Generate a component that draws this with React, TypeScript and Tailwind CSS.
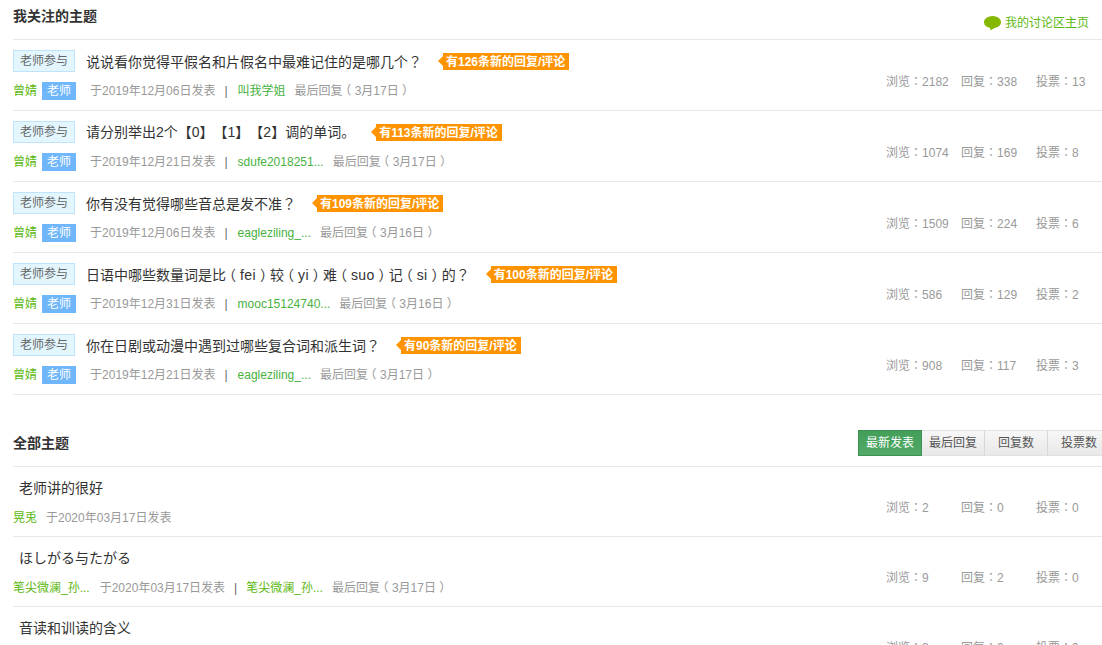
import React from "react";

const font = { fontFamily: '"Liberation Sans", "Noto Sans CJK SC", sans-serif' };
const centred = { fontFamily: '"Noto Sans CJK TC", sans-serif' };

type Row = { title: string; badge: string; last: string; date: string; reply: string; views: string; replies: string; votes: string };

const rows: Row[] = [
  { title: "说说看你觉得平假名和片假名中最难记住的是哪几个？", badge: "有126条新的回复/评论", last: "叫我学姐", date: "2019年12月06日", reply: "3月17日", views: "2182", replies: "338", votes: "13" },
  { title: "请分别举出2个【0】【1】【2】调的单词。", badge: "有113条新的回复/评论", last: "sdufe2018251...", date: "2019年12月21日", reply: "3月17日", views: "1074", replies: "169", votes: "8" },
  { title: "你有没有觉得哪些音总是发不准？", badge: "有109条新的回复/评论", last: "eagleziling_...", date: "2019年12月06日", reply: "3月16日", views: "1509", replies: "224", votes: "6" },
  { title: "日语中哪些数量词是比（fei）较（yi）难（suo）记（si）的？", badge: "有100条新的回复/评论", last: "mooc15124740...", date: "2019年12月31日", reply: "3月16日", views: "586", replies: "129", votes: "2" },
  { title: "你在日剧或动漫中遇到过哪些复合词和派生词？", badge: "有90条新的回复/评论", last: "eagleziling_...", date: "2019年12月21日", reply: "3月17日", views: "908", replies: "117", votes: "3" },
];

// The reference's font centres full-width punctuation in its em box.
function P({ text }: { text: string }) {
  return (
    <>
      {text.split(/([（）？：]|[a-z]+)/).map((part, i) => {
        if (part === "（") return <span key={i} className="inline-block -translate-x-[0.28em]">（</span>;
        if (part === "）") return <span key={i} className="inline-block translate-x-[0.28em]">）</span>;
        if (part === "？" || part === "：") return <span key={i} style={centred}>{part}</span>;
        if (/^[a-z]+$/.test(part)) return <span key={i} className="tracking-[0.4px]">{part}</span>;
        return part;
      })}
    </>
  );
}

function Stats({ views, replies, votes }: { views: string; replies: string; votes: string }) {
  return (
    <div className="mt-[12px] flex w-[216px] shrink-0 text-[12px] leading-[18px] text-[#999]">
      <span className="w-[75px]"><P text={`浏览：${views}`} /></span>
      <span className="w-[75px]"><P text={`回复：${replies}`} /></span>
      <span className="w-[66px]"><P text={`投票：${votes}`} /></span>
    </div>
  );
}

function Followed({ r }: { r: Row }) {
  return (
    <div className="flex h-[71px] items-center justify-between border-b border-[#e8e8e8]">
      <div className="flex flex-col">
        <div className="flex h-[22px] items-center">
          <span className="flex h-[22px] w-[62px] items-center justify-center border border-[#bfe3fb] bg-[#e3f6fe] text-[12px] text-[#666]">老师参与</span>
          <span className="ml-[11px] text-[14px] leading-[22px] text-[#333]"><P text={r.title} /></span>
          <span className="relative ml-[21px] mt-[1px] flex h-[17px] items-center bg-[#ff9400] pl-[3px] pr-[4px] text-[12px] font-bold text-white">
            <span className="absolute left-[-5px] top-[3px] h-0 w-0 border-y-[5px] border-r-[5px] border-y-transparent border-r-[#ff9400]" />
            {r.badge}
          </span>
        </div>
        <div className="mt-[10px] flex h-[18px] items-center text-[12px] text-[#999]">
          <span className="text-[#5cb811]">曾婧</span>
          <span className="ml-[5px] flex h-[18px] w-[34px] items-center justify-center bg-[#70b6fb] text-white">老师</span>
          <span className="ml-[14px]">于{r.date}发表</span>
          <span className="ml-[9px] mr-[10px] text-[#666]">|</span>
          <span className="text-[#47b13e]">{r.last}</span>
          <span className="ml-[9px]"><P text={`最后回复（${r.reply}）`} /></span>
        </div>
      </div>
      <Stats views={r.views} replies={r.replies} votes={r.votes} />
    </div>
  );
}

function Plain({ title, children, stats }: { title: string; children: React.ReactNode; stats: [string, string, string] }) {
  return (
    <div className="flex h-[70px] items-center justify-between border-b border-[#e8e8e8]">
      <div className="flex flex-col">
        <div className="ml-[6px] h-[22px] text-[14px] leading-[22px] text-[#333]">{title}</div>
        <div className="mt-[10px] flex h-[18px] items-center text-[12px] text-[#999]">{children}</div>
      </div>
      <Stats views={stats[0]} replies={stats[1]} votes={stats[2]} />
    </div>
  );
}

function SortBtn({ label, active, w }: { label: string; active?: boolean; w: string }) {
  return (
    <span
      className={
        active
          ? `flex h-[26px] ${w} items-center justify-center border border-[#3f9152] bg-gradient-to-b from-[#429f58] to-[#52ab68] text-[12px] text-white`
          : `flex h-[26px] ${w} items-center justify-center border-y border-r border-y-[#e2e2e2] border-r-[#d8d8d8] bg-gradient-to-b from-[#f7f7f7] to-[#e8e8e8] text-[12px] text-[#555]`
      }
    >
      {label}
    </span>
  );
}

export default function App() {
  return (
    <div style={font} className="h-[645px] w-[1102px] overflow-hidden bg-white pl-[13px] [text-spacing-trim:space-all]">
      <div className="flex h-[40px] justify-between border-b border-[#e8e8e8]">
        <h2 className="pt-[6px] text-[14px] font-bold leading-[20px] text-[#333]">我关注的主题</h2>
        <div className="mr-[13px] flex items-start pt-[14px] text-[12px] leading-[18px] text-[#5cb811]">
          <svg width="17" height="15" viewBox="0 0 17 15" className="mr-[4px] mt-[2px]">
            <ellipse cx="8.5" cy="6.2" rx="8.5" ry="6.2" fill="#85b800" />
            <path d="M6 11 L6.5 14.5 L11 11.5 Z" fill="#85b800" />
          </svg>
          我的讨论区主页
        </div>
      </div>
      {rows.map((r) => (
        <Followed key={r.title} r={r} />
      ))}
      <div className="mt-[35px] flex h-[37px] items-start justify-between border-b border-[#e8e8e8]">
        <h2 className="pt-[3px] text-[14px] font-bold leading-[20px] text-[#333]">全部主题</h2>
        <div className="-mr-[9px] flex shrink-0">
          <SortBtn label="最新发表" active w="w-[64px]" />
          <SortBtn label="最后回复" w="w-[63px]" />
          <SortBtn label="回复数" w="w-[63px]" />
          <SortBtn label="投票数" w="w-[63px]" />
        </div>
      </div>
      <Plain title="老师讲的很好" stats={["2", "0", "0"]}>
        <span className="text-[#5cb811]">晃兎</span>
        <span className="ml-[9px]">于2020年03月17日发表</span>
      </Plain>
      <Plain title="ほしがる与たがる" stats={["9", "2", "0"]}>
        <span className="text-[#5cb811]">笔尖微澜_孙...</span>
        <span className="ml-[10px]">于2020年03月17日发表</span>
        <span className="mx-[9px] text-[#666]">|</span>
        <span className="text-[#5cb811]">笔尖微澜_孙...</span>
        <span className="ml-[9px]"><P text="最后回复（3月17日）" /></span>
      </Plain>
      <Plain title="音读和训读的含义" stats={["3", "0", "0"]}>
        <span className="text-[#5cb811]">&nbsp;</span>
      </Plain>
    </div>
  );
}
